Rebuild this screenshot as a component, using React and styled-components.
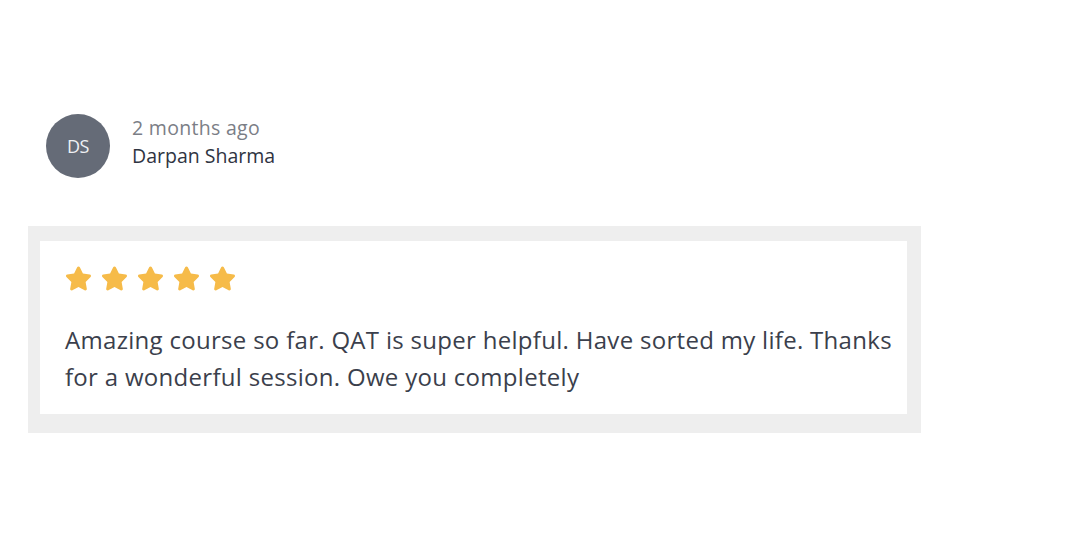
import React from 'react';
import styled, { createGlobalStyle } from 'styled-components';
import { FaStar } from 'react-icons/fa';

const GlobalStyle = createGlobalStyle`
  body {
    margin: 0;
    background: #fff;
    font-family: "Open Sans", "Noto Sans", sans-serif;
  }
`;

const Page = styled.div`
  padding: 114px 0 0 28px;
`;

const Header = styled.div`
  display: flex;
  align-items: flex-start;
  gap: 22px;
  margin-left: 18px;
`;

const Avatar = styled.div`
  width: 64px;
  height: 64px;
  border-radius: 50%;
  background: #656b77;
  color: #eef0f4;
  display: flex;
  align-items: center;
  justify-content: center;
  font-size: 18px;
  letter-spacing: -0.5px;
`;

const Meta = styled.div`
  display: flex;
  flex-direction: column;
`;

const When = styled.span`
  font-size: 19.5px;
  line-height: 28px;
  letter-spacing: 0.3px;
  color: #7b7e86;
`;

const Name = styled.span`
  font-size: 19.5px;
  line-height: 28px;
  color: #2f3442;
`;

const Card = styled.div`
  width: 867px;
  margin-top: 48px;
  background: #eeeeee;
  padding: 15px 14px 19px 12px;
`;

const Body = styled.div`
  background: #fff;
  padding: 24px 6px 0 25px;
  height: 173px;
  box-sizing: border-box;
`;

const Stars = styled.div`
  display: flex;
  gap: 9px;
  margin-bottom: 29px;
  color: #f6bb49;

  svg {
    display: block;
  }
`;

const Text = styled.p`
  margin: 0;
  font-size: 24px;
  line-height: 37px;
  letter-spacing: 0.3px;
  color: #3b3f4c;
`;

export default function App() {
  return (
    <Page>
      <GlobalStyle />
      <Header>
        <Avatar>DS</Avatar>
        <Meta>
          <When>2 months ago</When>
          <Name>Darpan Sharma</Name>
        </Meta>
      </Header>
      <Card>
        <Body>
          <Stars>
            {[0, 1, 2, 3, 4].map((i) => <FaStar key={i} size={27} />)}
          </Stars>
          <Text>
            Amazing course so far. QAT is super helpful. Have sorted my life. Thanks
            for a wonderful session. Owe you completely
          </Text>
        </Body>
      </Card>
    </Page>
  );
}
